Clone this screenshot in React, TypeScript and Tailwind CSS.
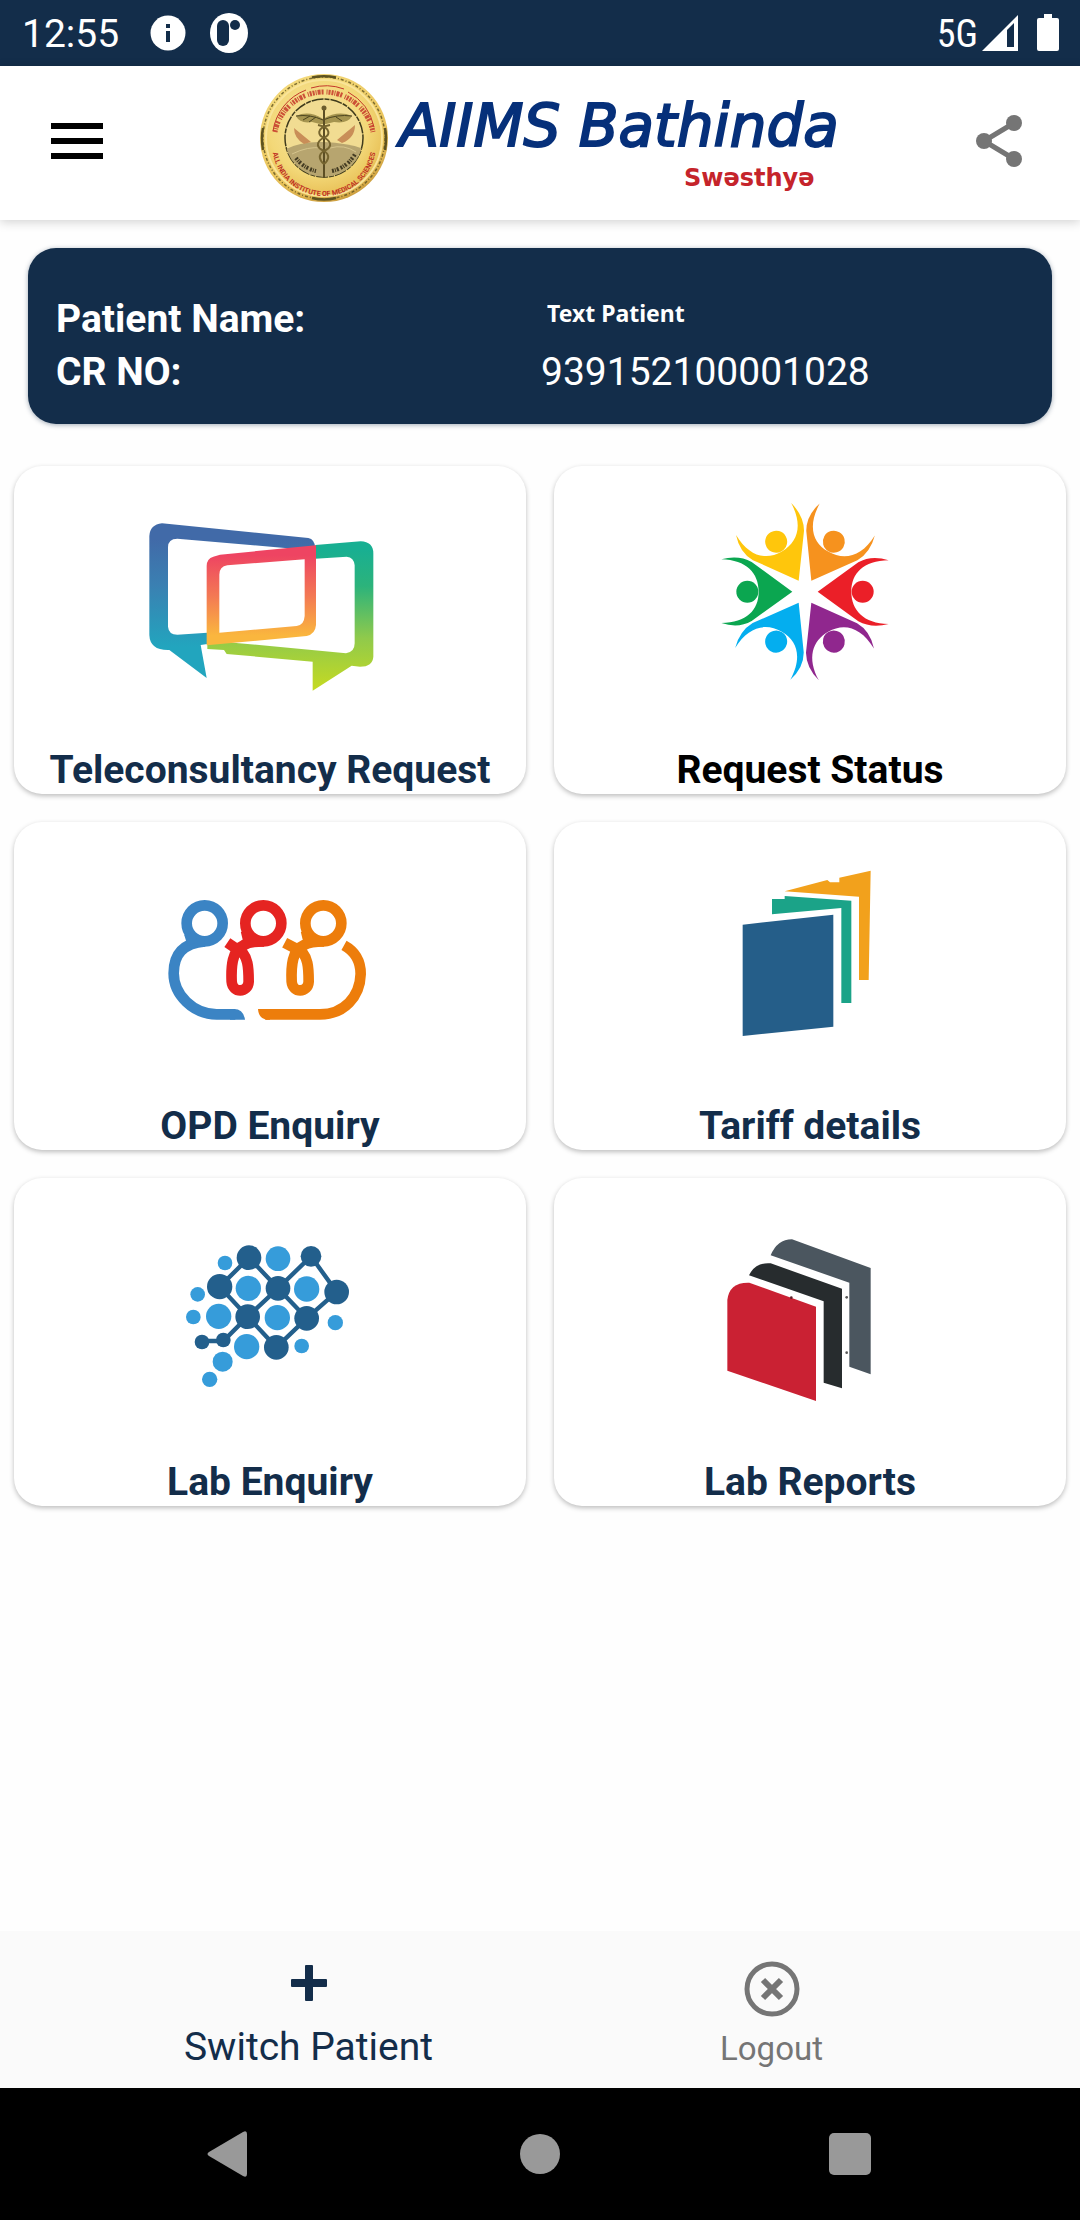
import type { ReactNode } from "react";

function AppSeal() {
  return (
    <svg viewBox="4 2 132 132" className="size-[132px] shrink-0" aria-label="Institute seal">
      <defs>
        <radialGradient id="gold" cx="0.45" cy="0.4" r="0.62">
          <stop offset="0" stopColor="#f8e6a6" />
          <stop offset="0.62" stopColor="#f3d878" />
          <stop offset="0.85" stopColor="#eac45c" />
          <stop offset="1" stopColor="#c99a3c" />
        </radialGradient>
        <path id="lowerRing" d="M18 74 A52 52 0 0 0 122 74" />
        <clipPath id="inner"><circle cx="70" cy="68" r="39" /></clipPath>
      </defs>
      <circle cx="70" cy="68" r="64" fill="url(#gold)" />
      <circle cx="70" cy="68" r="61" fill="none" stroke="#5e5320" strokeWidth="1.500" strokeDasharray="3 2 1 2" opacity="0.8" />
      <path d="M58 7.500 Q70 5 82 7.500 M58 128 Q70 131 82 128 M9 58 Q7 68 9 80 M131 58 Q133 68 131 80" fill="none" stroke="#5e5320" strokeWidth="2.500" />
      <circle cx="70" cy="68" r="58" fill="none" stroke="#f9e498" strokeWidth="2" />
      <path d="M21 62 A50 50 0 0 1 119 62" fill="none" stroke="#c4382a" strokeWidth="5" strokeDasharray="2 1 1 1 3 1 2 3 1 1 2 1" opacity="0.85" />
      <path d="M19 61 A52 52 0 0 1 52 20 M57 18 A52 52 0 0 1 90 19 M94 22 A52 52 0 0 1 120 57" fill="none" stroke="#c4382a" strokeWidth="1" />
      <circle cx="70" cy="68" r="39" fill="#f1dc92" stroke="#3f3b1c" strokeWidth="1.500" strokeDasharray="12 1 5 1" />
      <g clipPath="url(#inner)">
        <path d="M30 80 Q46 71 70 72 T110 79 V110 H30Z" fill="#b7a56f" />
        <path d="M38 84 Q54 76 68 78 M76 78 Q90 74 102 82" stroke="#d5c48c" fill="none" />
      </g>
      <path d="M40 58 L57 72 L50 74 Q40 68 40 58 M101 55 Q101 68 88 73 L83 70Z" fill="#c98e58" />
      <path d="M42 46 Q55 40 69 49 Q84 40 98 46 Q94 54 80 52 L72 54 H66 L58 52 Q46 54 42 46Z" fill="#a5944f" />
      <path d="M42 46 Q56 44 69 50 Q83 44 98 46 M49 50 L56 46 M55 52 L62 47 M82 47 L88 51" stroke="#4d451f" fill="none" />
      <path d="M70 37 V108" stroke="#5c4e24" strokeWidth="2" />
      <circle cx="70" cy="38" r="2.500" fill="#6b5c2c" />
      <path d="M64 55 C78 58 76 66 69 68 C61 73 63 78 70 81 C77 85 74 91 70 94 M76 55 C61 58 64 66 71 68 C79 73 77 78 70 81 C63 85 66 91 70 94" fill="none" stroke="#75642f" strokeWidth="2" />
      <path d="M42 88 A34 34 0 0 0 62 101 M78 101 A34 34 0 0 0 101 84" fill="none" stroke="#433b22" strokeWidth="4" strokeDasharray="2 1 1 1 2 2" />
      <text fill="#bf3023" fontSize="7" fontFamily="Roboto, sans-serif" fontWeight="700">
        <textPath href="#lowerRing" startOffset="50%" textAnchor="middle">ALL INDIA INSTITUTE OF MEDICAL SCIENCES</textPath>
      </text>
    </svg>
  );
}

function TeleIcon() {
  return (
    <svg viewBox="30 0 840 720" className="h-[240px] w-[280px]" aria-hidden="true">
      <defs>
        <linearGradient id="tBlue" x1="0" y1="0" x2="0" y2="1">
          <stop offset="0.1" stopColor="#416aa8" /><stop offset="0.4" stopColor="#3a80b2" /><stop offset="0.8" stopColor="#22a5be" />
        </linearGradient>
        <linearGradient id="tGreen" x1="0" y1="0" x2="0" y2="1">
          <stop offset="0.05" stopColor="#18af92" /><stop offset="0.3" stopColor="#2cb37b" /><stop offset="0.65" stopColor="#90ca4b" /><stop offset="1" stopColor="#c6da21" />
        </linearGradient>
        <linearGradient id="tRed" x1="0" y1="0" x2="0" y2="1">
          <stop offset="0.1" stopColor="#ee4462" /><stop offset="0.5" stopColor="#f37854" /><stop offset="0.9" stopColor="#fab63e" />
        </linearGradient>
      </defs>
      <path fill="url(#tBlue)" fillRule="evenodd" d="M126 130 L565 174 Q584 178 586 204 L520 206 L172 176 Q144 176 144 202 V440 Q146 464 172 464 L262 458 V492 L242 495 L260 594 L148 510 Q90 512 88 465 V168 Q90 134 126 130Z" />
      <path fill="url(#tGreen)" d="M586 195 L722 184 Q760 186 760 220 V530 Q758 560 720 560 L695 557 L578 632 V545 L320 522 L312 510 L262 507 V490 L340 488 L678 520 Q704 516 704 490 V256 Q702 232 680 230 L586 236Z" />
      <path fill="url(#tRed)" fillRule="evenodd" d="M280 230 L300 224 L588 196 V435 Q586 462 560 468 L260 496 V258 Q260 236 280 230Z M322 256 Q298 260 298 284 V458 L530 438 Q552 436 554 408 V238Z" />
    </svg>
  );
}

const people = [
  { color: "#eb1f28", turn: "rotate(0 345 335)" },
  { color: "#90278e", turn: "rotate(60 345 335)" },
  { color: "#04aeef", turn: "rotate(120 345 335)" },
  { color: "#0ba650", turn: "rotate(180 345 335)" },
  { color: "#ffc60c", turn: "rotate(240 345 335)" },
  { color: "#f6921e", turn: "rotate(300 345 335)" },
];

function StatusIcon() {
  return (
    <svg viewBox="-60 0 840 720" className="h-[240px] w-[280px]" aria-hidden="true">
      {people.map((p) => (
        <g key={p.color} fill={p.color} transform={p.turn}>
          <path d="M383 335 L505 247 Q545 224 596 241 C520 243 484 280 484 335 C484 390 520 430 596 432 Q545 446 505 424Z" />
          <circle cx="518" cy="335" r="33" />
        </g>
      ))}
    </svg>
  );
}

function OpdIcon() {
  return (
    <svg viewBox="-30 -102 840 720" className="h-[240px] w-[280px]" fill="none" strokeWidth="32" aria-hidden="true">
      <g stroke="#3b84c4">
        <circle cx="194" cy="160" r="54" />
        <path d="M194 214 C130 220 101 252 101 310 C101 375 160 433 230 433 H286" />
        <path d="M148 190 L158 222" />
        <path d="M282 417 Q310 417 315 449 H270 V417Z" fill="#3b84c4" stroke="none" />
      </g>
      <g stroke="#e52421">
        <circle cx="370" cy="160" r="54" />
        <path d="M262 218 L292 238 C326 250 326 300 326 335 C324 370 278 370 275 335 C273 290 276 240 310 226 Q330 214 372 214 M318 182 L326 215" />
      </g>
      <g stroke="#ed7d0b">
        <circle cx="550" cy="160" r="54" />
        <path d="M434 218 L472 238 C506 250 506 300 506 335 C504 370 458 370 455 335 C453 290 456 240 490 226 Q510 214 552 214 M498 182 L506 215" />
        <path d="M612 226 C645 244 662 270 662 312 C660 380 612 433 540 433 H376" />
        <path d="M354 417 H390 V449 H378 Q356 445 354 417Z" fill="#ed7d0b" stroke="none" />
      </g>
    </svg>
  );
}

function TariffIcon() {
  return (
    <svg viewBox="-150 -42 840 720" className="h-[240px] w-[280px]" aria-hidden="true">
      <path fill="#255e89" d="M68 224 L340 194 V530 L68 558Z" />
      <path fill="#1ba388" d="M156 147 H194 V138 L394 152 V459 H364 V174 L156 193Z" />
      <path fill="#f2a11c" d="M194 124 L322 90 L330 97 H358 V83 L452 62 L446 390 H417 V140Z" />
    </svg>
  );
}

const darkDots = [[237, 113, 37], [423, 109, 31], [149, 200, 38], [324, 205, 37], [500, 216, 37], [233, 290, 37], [410, 295, 37], [319, 382, 37], [160, 360, 22], [96, 366, 22]];
const lightDots = [[324, 116, 37], [165, 129, 22], [235, 205, 38], [410, 207, 38], [83, 223, 22], [70, 291, 22], [146, 289, 38], [322, 293, 38], [496, 308, 23], [230, 380, 38], [395, 378, 22], [158, 425, 30], [119, 478, 23]];

function LabIcon() {
  return (
    <svg viewBox="-120 -84 840 720" className="h-[240px] w-[280px]" aria-hidden="true">
      <path d="M96 363 H160 L233 290 L324 205 L423 109 L500 216 L410 295 L319 382 L233 290 L149 200 L237 113 L324 205 L410 295" fill="none" stroke="#235f8c" strokeWidth="13" />
      {darkDots.map(([x, y, r]) => <circle key={`${x}-${y}`} cx={x} cy={y} r={r} fill="#235f8c" />)}
      {lightDots.map(([x, y, r]) => <circle key={`${x}-${y}`} cx={x} cy={y} r={r} fill="#369cda" />)}
    </svg>
  );
}

function ReportsIcon() {
  return (
    <svg viewBox="-90 -84 840 720" className="h-[240px] w-[280px]" aria-hidden="true">
      <path fill="#4b565f" d="M212 106 Q232 58 276 58 L512 144 V463 L448 440 V188Z" />
      <path fill="#272c2e" d="M147 166 Q166 126 212 130 L426 206 V505 L371 488 V244Z" />
      <path fill="#ca2133" d="M82 452 V240 Q88 186 148 188 L348 260 V543Z" />
      <circle cx="274" cy="233" r="4" fill="#5c2028" />
      <circle cx="440" cy="232" r="4" fill="#555" />
      <circle cx="440" cy="398" r="4" fill="#555" />
    </svg>
  );
}

const tiles: { label: string; icon: ReactNode; black?: boolean }[] = [
  { label: "Teleconsultancy Request", icon: <TeleIcon /> },
  { label: "Request Status", icon: <StatusIcon />, black: true },
  { label: "OPD Enquiry", icon: <OpdIcon /> },
  { label: "Tariff details", icon: <TariffIcon /> },
  { label: "Lab Enquiry", icon: <LabIcon /> },
  { label: "Lab Reports", icon: <ReportsIcon /> },
];

function StatusBar() {
  return (
    <div className="flex h-[66px] items-center bg-[#132d4a] pr-[21px] pl-[22px] text-white">
      <span className="pt-[2px] text-[39px] leading-[64px]">12:55</span>
      <svg viewBox="0 0 36 36" className="ml-[31px] size-9" aria-label="Information">
        <circle cx="18" cy="18" r="17.500" fill="#fff" />
        <path d="M16 9h4v4h-4z M16 16h4v11h-4z" fill="#132d4a" />
      </svg>
      <svg viewBox="0 0 38 40" className="ml-[24px] h-10 w-[38px]" aria-label="App notification">
        <ellipse cx="19" cy="20" rx="19" ry="20" fill="#fff" />
        <rect x="7" y="7" width="12" height="26" rx="6" fill="#132d4a" />
        <circle cx="25" cy="12" r="5" fill="#132d4a" />
      </svg>
      <span className="ml-auto pt-[2px] font-['Roboto_Condensed','Roboto',sans-serif] text-[38px] leading-[64px]">5G</span>
      <svg viewBox="0 0 36 36" className="ml-[4px] size-9" aria-label="Signal strength">
        <path d="M0 36 L36 0 V36Z" fill="#fff" />
        <path d="M25 15 L32 8 V32 H25Z" fill="#132d4a" />
      </svg>
      <svg viewBox="0 0 22 38" className="ml-[19px] h-[38px] w-[22px]" aria-label="Battery">
        <path d="M7 0h8v4h5q2 0 2 2v29q0 2-2 2H2q-2 0-2-2V6q0-2 2-2h5z" fill="#fff" />
      </svg>
    </div>
  );
}

export default function App() {
  return (
    <div className="flex min-h-screen flex-col bg-[#fefefe] font-['Roboto',sans-serif]">
      <StatusBar />
      <header className="flex h-[154px] items-center justify-between bg-white pr-[58px] pb-1 pl-[51px] shadow-[0_2px_10px_rgba(0,0,0,0.18)]">
        <button type="button" aria-label="Open menu" className="flex w-[52px] flex-col gap-[9px]">
          <span className="h-[6px] bg-black" />
          <span className="h-[6px] bg-black" />
          <span className="h-[6px] bg-black" />
        </button>
        <div className="ml-6 flex h-full w-[588px] items-start gap-[10px] pt-[6px]">
          <AppSeal />
          <div className="flex w-[446px] flex-col pt-5 whitespace-nowrap">
            <span className="font-['DejaVu_Sans',cursive] text-[58px] leading-[68px] text-[#06307a] italic [-webkit-text-stroke:2px_#06307a]">AIIMS Bathinda</span>
            <span className="pr-[31px] text-right font-['DejaVu_Sans',sans-serif] text-[24px] leading-[36px] font-bold text-[#c5242b]">Swəsthyə</span>
          </div>
        </div>
        <button type="button" aria-label="Share">
          <svg viewBox="0 0 46 52" className="h-[52px] w-[46px]">
            <path d="M38 8 L8 26 L38 44" fill="none" stroke="#757575" strokeWidth="5" />
            <circle cx="38" cy="8" r="8" fill="#757575" />
            <circle cx="8" cy="26" r="8" fill="#757575" />
            <circle cx="38" cy="44" r="8" fill="#757575" />
          </svg>
        </button>
      </header>

      <main className="grow">
        <dl className="mx-7 mt-7 grid grid-cols-[485fr_483fr] rounded-[28px] bg-[#132d4a] px-7 pt-[45px] pb-[25px] text-[39px] leading-[53px] text-white shadow-[0_1px_5px_rgba(19,45,74,0.4)]">
          <dt className="font-bold">Patient Name:</dt>
          <dd className="pl-[6px] font-['Noto_Sans',sans-serif] text-[23px] leading-[40px] font-bold">Text Patient</dd>
          <dt className="font-bold">CR NO:</dt>
          <dd>939152100001028</dd>
        </dl>

        <div className="mx-[14px] mt-[42px] grid grid-cols-2 gap-7">
          {tiles.map((t) => (
            <button
              key={t.label}
              type="button"
              className="flex h-[328px] flex-col items-center justify-between rounded-[28px] bg-white pt-[14px] pb-[2px] shadow-[0_2px_5px_rgba(0,0,0,0.26)]"
            >
              {t.icon}
              <span className={t.black ? "text-[39px] leading-[44px] font-bold text-black" : "text-[39px] leading-[44px] font-bold text-[#132d4a]"}>
                {t.label}
              </span>
            </button>
          ))}
        </div>
      </main>

      <nav aria-label="Account" className="flex h-[157px] bg-[#fafafa] px-[77px]">
        <button type="button" className="flex flex-1 flex-col items-center justify-between pt-[34px] pb-[19px] text-[39px] leading-[44px] text-[#132d4a]">
          <svg viewBox="0 0 36 36" className="size-9" aria-hidden="true">
            <path d="M14 1q0-1 1-1h6q1 0 1 1v13h13q1 0 1 1v6q0 1-1 1H22v13q0 1-1 1h-6q-1 0-1-1V22H1q-1 0-1-1v-6q0-1 1-1h13z" fill="currentColor" />
          </svg>
          Switch Patient
        </button>
        <button type="button" className="flex flex-1 flex-col items-center justify-between pt-[30px] pb-[19px] text-[33px] leading-[40px] text-[#757575]">
          <svg viewBox="0 0 56 56" className="size-14" fill="none" stroke="currentColor" aria-hidden="true">
            <circle cx="28" cy="28" r="25" strokeWidth="5" />
            <path d="M19 19 L37 37 M37 19 L19 37" strokeWidth="6" />
          </svg>
          Logout
        </button>
      </nav>

      <nav aria-label="System navigation" className="flex h-[132px] items-center bg-black px-[75px] text-[#999]">
        <button type="button" aria-label="Back" className="flex w-1/3 justify-center pr-1">
          <svg viewBox="0 0 42 46" className="h-[46px] w-[42px]"><path d="M2 21 L36 1 Q40 -1 40 3 V43 Q40 47 36 45 L2 25 Q-1 23 2 21Z" fill="currentColor" /></svg>
        </button>
        <button type="button" aria-label="Home" className="flex w-1/3 justify-center">
          <span className="size-10 rounded-full bg-[#999]" />
        </button>
        <button type="button" aria-label="Recent apps" className="flex w-1/3 justify-center">
          <span className="size-[42px] rounded-[5px] bg-[#999]" />
        </button>
      </nav>
    </div>
  );
}
